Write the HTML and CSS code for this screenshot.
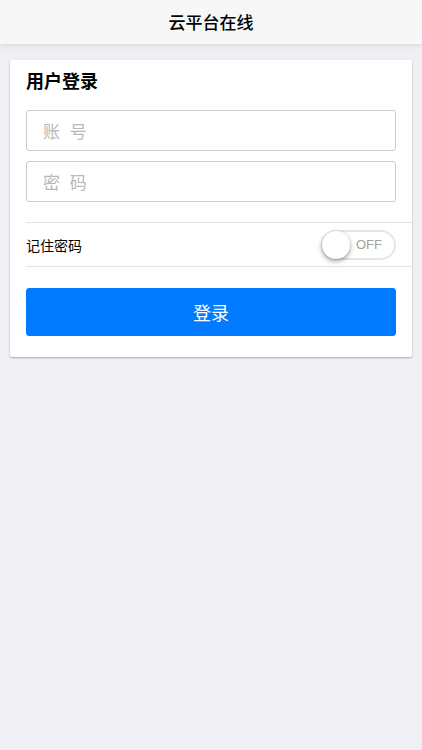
FILE: index.html
```html
<!DOCTYPE html>
<html lang="zh-CN">
<head>
<meta charset="utf-8">
<title>云平台在线</title>
<link rel="stylesheet" href="styles.css">
</head>
<body>
<header class="bar"><h1 class="bar-title">云平台在线</h1></header>
<main class="content">
  <section class="card">
    <h2 class="card-title">用户登录</h2>
    <form class="form">
      <input class="field" type="text" placeholder="账 号">
      <input class="field" type="password" placeholder="密 码">
    </form>
    <div class="list">
      <div class="list-row">
        <span class="row-label">记住密码</span>
        <div class="switch"><span class="switch-knob"></span><span class="switch-text">OFF</span></div>
      </div>
    </div>
    <button class="btn" type="button">登录</button>
  </section>
</main>
</body>
</html>
```
FILE: styles.css
```css
* { box-sizing: border-box; }
html, body {
  margin: 0;
  padding: 0;
  height: 100%;
}
body {
  background: #efeff4;
  font-family: "Noto Sans CJK SC", "Noto Sans", sans-serif;
  color: #000;
}
.bar {
  height: 44px;
  background: #f7f7f7;
  box-shadow: 0 1px 6px rgba(0,0,0,.12);
  display: flex;
  align-items: center;
  justify-content: center;
  position: relative;
  z-index: 2;
}
.bar-title {
  margin: 0;
  font-size: 17px;
  font-weight: 500;
  line-height: 44px;
}
.content {
  padding: 16px 10px 0;
}
.card {
  background: #fff;
  border-radius: 2px;
  box-shadow: 0 1px 2px rgba(0,0,0,.3);
  padding: 9px 0 21px 16px;
}
.card-title {
  margin: 0;
  font-size: 18px;
  font-weight: 700;
  line-height: 22px;
}
.form {
  margin: 19px 16px 0 0;
  display: flex;
  flex-direction: column;
  gap: 10px;
}
.field {
  display: block;
  width: 100%;
  height: 41px;
  border: 1px solid #ccc;
  border-radius: 3px;
  padding: 0 16px;
  font-family: inherit;
  font-size: 17px;
  color: #000;
  background: #fff;
  outline: none;
}
.field::placeholder {
  color: #b8b8b8;
  letter-spacing: 3px;
}
.list {
  margin-top: 20px;
  border-top: 1px solid #e3e3e3;
  border-bottom: 1px solid #e3e3e3;
}
.list-row {
  height: 43px;
  display: flex;
  align-items: center;
  justify-content: space-between;
  padding-right: 16px;
}
.row-label {
  font-size: 14px;
}
.switch {
  position: relative;
  width: 75px;
  height: 30px;
  border: 2px solid #e6e6e6;
  border-radius: 20px;
  background: #fff;
  display: flex;
  align-items: center;
  justify-content: flex-end;
  padding-right: 12px;
}
.switch-knob {
  position: absolute;
  left: -1px;
  top: -1px;
  width: 28px;
  height: 28px;
  border-radius: 50%;
  background: #fff;
  box-shadow: 0 2px 5px rgba(0,0,0,.4);
}
.switch-text {
  font-family: "Liberation Sans", Arial, sans-serif;
  font-size: 13px;
  color: #a0a0a0;
}
.btn {
  display: block;
  width: calc(100% - 16px);
  margin-top: 21px;
  height: 48px;
  border: 1px solid #007aff;
  border-radius: 3px;
  background: #007aff;
  color: #fff;
  font-family: inherit;
  font-size: 18px;
  padding: 0;
}
```
